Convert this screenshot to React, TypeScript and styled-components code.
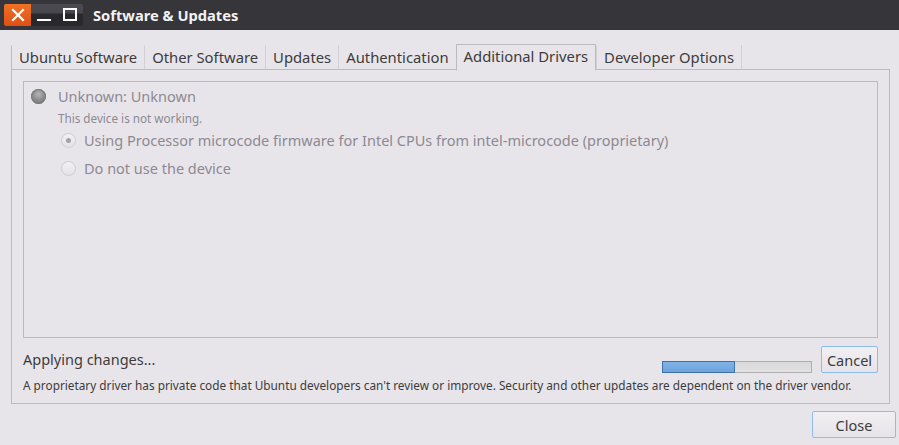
import styled, { createGlobalStyle } from 'styled-components'

const GlobalStyle = createGlobalStyle`
  html, body {
    margin: 0;
    padding: 0;
  }
  body {
    width: 899px;
    height: 445px;
    overflow: hidden;
    background: #e8e5ea;
    font-family: "Noto Sans", "DejaVu Sans", sans-serif;
    color: #3c3c3c;
  }
`

const tabs = [
  'Ubuntu Software',
  'Other Software',
  'Updates',
  'Authentication',
  'Additional Drivers',
  'Developer Options',
]

export const App = () => {
  return (
    <Window>
      <GlobalStyle />
      <TitleBar>
        <WindowButtons>
          <CloseBtn>
            <svg width="14" height="14" viewBox="0 0 14 14">
              <path d="M2 2 L12 12 M12 2 L2 12" stroke="#fff" strokeWidth="2.2" strokeLinecap="square" />
            </svg>
          </CloseBtn>
          <WinBtn>
            <svg width="16" height="16" viewBox="0 0 16 16">
              <rect x="1" y="12" width="14" height="2" fill="#fff" />
            </svg>
          </WinBtn>
          <WinBtn>
            <svg width="16" height="16" viewBox="0 0 16 16">
              <rect x="2" y="2" width="12" height="11" fill="none" stroke="#fff" strokeWidth="2" />
            </svg>
          </WinBtn>
        </WindowButtons>
        <Title>Software &amp; Updates</Title>
      </TitleBar>

      <Body>
        <TabRow>
          {tabs.map((t) => (
            <Tab key={t} active={t === 'Additional Drivers'}>{t}</Tab>
          ))}
          <TabFill />
        </TabRow>
        <Notebook>
          <DeviceBox>
            <DeviceRow>
              <Sphere />
              <div>
                <DeviceName>Unknown: Unknown</DeviceName>
                <DeviceNote>This device is not working.</DeviceNote>
              </div>
            </DeviceRow>
            <Option>
              <Radio checked />
              <OptionLabel>Using Processor microcode firmware for Intel CPUs from intel-microcode (proprietary)</OptionLabel>
            </Option>
            <Option>
              <Radio />
              <OptionLabel>Do not use the device</OptionLabel>
            </Option>
          </DeviceBox>

          <StatusRow>
            <Status>Applying changes...</Status>
            <Progress>
              <ProgressFill style={{ width: '49%' }} />
            </Progress>
            <Button>Cancel</Button>
          </StatusRow>
          <Notice>
            A proprietary driver has private code that Ubuntu developers can't review or improve. Security and other updates are dependent on the driver vendor.
          </Notice>
        </Notebook>
        <ActionRow>
          <Button wide>Close</Button>
        </ActionRow>
      </Body>
    </Window>
  )
}

export default App

const Window = styled.div`
  width: 899px;
  height: 445px;
  display: flex;
  flex-direction: column;
`

const TitleBar = styled.div`
  height: 30px;
  flex-shrink: 0;
  background: #363539;
  display: flex;
  align-items: center;
  padding-left: 4px;
`

const WindowButtons = styled.div`
  display: flex;
  height: 22px;
  width: 79px;
  border-radius: 2px;
  background: linear-gradient(#4c4b51 0, #47464c 9px, #29282c 10px, #29282c 100%);
  overflow: hidden;
`

const CloseBtn = styled.div`
  width: 27px;
  height: 22px;
  background: linear-gradient(#f07224, #df4f15);
  display: flex;
  align-items: center;
  justify-content: center;
`

const WinBtn = styled.div`
  width: 26px;
  height: 22px;
  display: flex;
  align-items: center;
  justify-content: center;
`

const Title = styled.div`
  margin-left: 10px;
  font-size: 14.7px;
  font-weight: 700;
  color: #f2f2f2;
`

const Body = styled.div`
  padding: 13px 0 0 11px;
  display: flex;
  flex-direction: column;
`

const TabRow = styled.div`
  display: flex;
  align-items: flex-end;
  height: 27px;
  width: 879px;
`

const Tab = styled.div<{ active?: boolean }>`
  height: ${(p) => (p.active ? '27px' : '25px')};
  box-sizing: border-box;
  padding: 0 7px ${(p) => (p.active ? '3px' : '2px')};
  display: flex;
  align-items: center;
  font-size: 14.8px;
  white-space: nowrap;
  color: #3c3c3c;
  border-left: 1px solid ${(p) => (p.active ? '#bcbac0' : '#d2d0d5')};
  border-top: 1px solid ${(p) => (p.active ? '#bcbac0' : 'transparent')};
  border-right: ${(p) => (p.active ? '1px solid #bcbac0' : '0')};
  border-bottom: 1px solid ${(p) => (p.active ? 'transparent' : '#bcbac0')};
  margin-bottom: ${(p) => (p.active ? '-1px' : '0')};
  background: ${(p) => (p.active ? '#e8e5ea' : 'transparent')};
  &:first-child {
    border-left-color: #bcbac0;
  }
`

const TabFill = styled.div`
  flex: 1;
  height: 25px;
  box-sizing: border-box;
  border-left: 1px solid #d2d0d5;
  border-bottom: 1px solid #bcbac0;
`

const Notebook = styled.div`
  width: 879px;
  height: 334px;
  box-sizing: border-box;
  border: 1px solid #bcbac0;
  border-top: 0;
  padding: 11px 11px 0 11px;
  display: flex;
  flex-direction: column;
`

const DeviceBox = styled.div`
  height: 257px;
  flex-shrink: 0;
  box-sizing: border-box;
  border: 1px solid #bcbac0;
  padding: 5px 7px;
`

const DeviceRow = styled.div`
  display: flex;
  gap: 12px;
`

const Sphere = styled.div`
  width: 15px;
  height: 15px;
  margin-top: 2px;
  border-radius: 50%;
  flex-shrink: 0;
  background: radial-gradient(circle at 50% 35%, #b4b4b4 0, #8e8e8e 45%, #6c6c6c 100%);
  box-shadow: 0 0 0 1px #7a7a7a inset;
`

const DeviceName = styled.div`
  font-size: 14.5px;
  line-height: 18px;
  color: #8d8992;
`

const DeviceNote = styled.div`
  font-size: 11.7px;
  line-height: 16px;
  margin-top: 5px;
  color: #8d8992;
`

const Option = styled.div`
  display: flex;
  align-items: center;
  gap: 8px;
  margin-left: 30px;
  height: 28px;
`

const Radio = styled.div<{ checked?: boolean }>`
  width: 15px;
  height: 15px;
  box-sizing: border-box;
  border-radius: 50%;
  border: 1px solid #cfcdd2;
  background: linear-gradient(#f2f0f3, #e4e2e6);
  display: flex;
  align-items: center;
  justify-content: center;
  &::after {
    content: '';
    display: ${(p) => (p.checked ? 'block' : 'none')};
    width: 5px;
    height: 5px;
    border-radius: 50%;
    background: #a4a2a7;
  }
`

const OptionLabel = styled.div`
  font-size: 14.5px;
  color: #8d8992;
`

const StatusRow = styled.div`
  display: flex;
  align-items: center;
  margin-top: 8px;
  height: 27px;
`

const Status = styled.div`
  flex: 1;
  font-size: 14.5px;
  color: #3c3c3c;
  align-self: flex-start;
  margin-top: 3px;
`

const Progress = styled.div`
  width: 150px;
  height: 12px;
  box-sizing: border-box;
  border: 1px solid #aeadb0;
  background: linear-gradient(#d8d8d8, #e2e2e2);
  margin-top: 14px;
  margin-right: 9px;
  display: flex;
`

const ProgressFill = styled.div`
  box-sizing: border-box;
  border: 1px solid #3f72ad;
  margin: -1px 0 -1px -1px;
  height: 12px;
  background: linear-gradient(#80b3e8, #6ea2da);
`

const Button = styled.button<{ wide?: boolean }>`
  font-family: inherit;
  font-size: 14.5px;
  color: #3c3c3c;
  height: 27px;
  width: ${(p) => (p.wide ? '84px' : '57px')};
  padding: 0;
  box-sizing: border-box;
  border: 1px solid #8fbbee;
  border-radius: 2px;
  background: linear-gradient(#f1eff2, #e6e4e8);
`

const Notice = styled.div`
  font-size: 11.8px;
  margin-top: 4px;
  color: #3c3c3c;
`

const ActionRow = styled.div`
  display: flex;
  justify-content: flex-end;
  width: 885px;
  margin-top: 7px;
`
